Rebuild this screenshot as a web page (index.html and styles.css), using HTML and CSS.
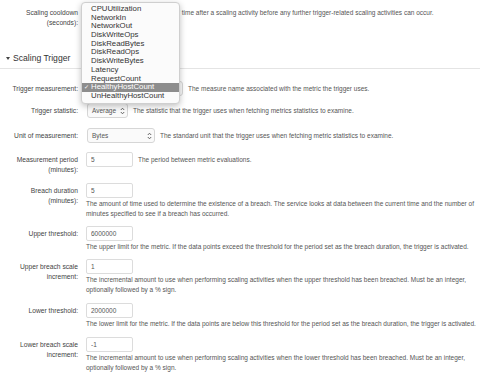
FILE: index.html
```html
<!DOCTYPE html>
<html lang="en">
<head>
  <meta charset="UTF-8">
  <title>Scaling Trigger</title>
  <link rel="stylesheet" href="styles.css">
</head>
<body>
  <div class="page">

    <div class="row r-cooldown">
      <div class="label">Scaling cooldown<br>(seconds):</div>
      <div class="field inline">
        <input class="num" type="text" value="360">
        <span class="desc">The amount of time after a scaling activity before any further trigger-related scaling activities can occur.</span>
      </div>
    </div>

    <h3 class="section"><span class="caret"></span>Scaling Trigger</h3>

    <div class="row r-measure">
      <div class="label">Trigger measurement:</div>
      <div class="field inline">
        <div class="select w-measure open"><span>HealthyHostCount</span><svg width="5" height="8" viewBox="0 0 5 8"><path d="M0.8 3 L2.5 1.2 L4.2 3 M0.8 5 L2.5 6.8 L4.2 5" fill="none" stroke="#555" stroke-width="0.9"/></svg></div>
        <span class="desc">The measure name associated with the metric the trigger uses.</span>
      </div>
    </div>

    <div class="row r-stat">
      <div class="label">Trigger statistic:</div>
      <div class="field inline">
        <div class="select w-stat"><span>Average</span><svg width="5" height="8" viewBox="0 0 5 8"><path d="M0.8 3 L2.5 1.2 L4.2 3 M0.8 5 L2.5 6.8 L4.2 5" fill="none" stroke="#555" stroke-width="0.9"/></svg></div>
        <span class="desc">The statistic that the trigger uses when fetching metrics statistics to examine.</span>
      </div>
    </div>

    <div class="row r-unit">
      <div class="label">Unit of measurement:</div>
      <div class="field inline">
        <div class="select w-unit"><span>Bytes</span><svg width="5" height="8" viewBox="0 0 5 8"><path d="M0.8 3 L2.5 1.2 L4.2 3 M0.8 5 L2.5 6.8 L4.2 5" fill="none" stroke="#555" stroke-width="0.9"/></svg></div>
        <span class="desc">The standard unit that the trigger uses when fetching metric statistics to examine.</span>
      </div>
    </div>

    <div class="row r-period">
      <div class="label">Measurement period<br>(minutes):</div>
      <div class="field inline">
        <input class="num" type="text" value="5">
        <span class="desc">The period between metric evaluations.</span>
      </div>
    </div>

    <div class="row r-breach">
      <div class="label">Breach duration<br>(minutes):</div>
      <div class="field">
        <input class="num" type="text" value="5">
        <p class="desc block">The amount of time used to determine the existence of a breach. The service looks at data between the current time and the number of minutes specified to see if a breach has occurred.</p>
      </div>
    </div>

    <div class="row r-upper">
      <div class="label">Upper threshold:</div>
      <div class="field">
        <input class="num" type="text" value="6000000">
        <p class="desc block">The upper limit for the metric. If the data points exceed the threshold for the period set as the breach duration, the trigger is activated.</p>
      </div>
    </div>

    <div class="row">
      <div class="label">Upper breach scale<br>increment:</div>
      <div class="field">
        <input class="num" type="text" value="1">
        <p class="desc block">The incremental amount to use when performing scaling activities when the upper threshold has been breached. Must be an integer,<br>optionally followed by a % sign.</p>
      </div>
    </div>

    <div class="row">
      <div class="label">Lower threshold:</div>
      <div class="field">
        <input class="num" type="text" value="2000000">
        <p class="desc block">The lower limit for the metric. If the data points are below this threshold for the period set as the breach duration, the trigger is activated.</p>
      </div>
    </div>

    <div class="row">
      <div class="label">Lower breach scale<br>increment:</div>
      <div class="field">
        <input class="num" type="text" value="-1">
        <p class="desc block">The incremental amount to use when performing scaling activities when the lower threshold has been breached. Must be an integer,<br>optionally followed by a % sign.</p>
      </div>
    </div>

    <!-- open dropdown of the trigger measurement select -->
    <ul class="menu">
      <li>CPUUtilization</li>
      <li>NetworkIn</li>
      <li>NetworkOut</li>
      <li>DiskWriteOps</li>
      <li>DiskReadBytes</li>
      <li>DiskReadOps</li>
      <li>DiskWriteBytes</li>
      <li>Latency</li>
      <li>RequestCount</li>
      <li class="picked"><span class="check">✓</span>HealthyHostCount</li>
      <li>UnHealthyHostCount</li>
    </ul>

  </div>
</body>
</html>
```

FILE: styles.css
```css
body {
  margin: 0;
  background: #fff;
  font-family: 'Liberation Sans', Arial, sans-serif;
  font-size: 6.5px;
  color: #444;
}
.page {
  position: relative;
  padding-top: 5px;
  width: 480px;
  height: 374px;
  overflow: hidden;
}
.row {
  display: flex;
  margin-bottom: 8px;
}
.label {
  width: 78px;
  flex-shrink: 0;
  text-align: right;
  font-size: 6.7px;
  line-height: 9.5px;
  padding-top: 3px;
  color: #444;
}
.field {
  margin-left: 8px;
  flex: 1;
  min-width: 0;
}
.field.inline {
  display: flex;
  align-items: center;
  height: 15px;
}
.desc {
  color: #555;
  line-height: 10px;
  white-space: nowrap;
  margin-left: 5px;
}
.desc.block {
  white-space: normal;
  margin: 1px 0 0 0;
  padding-right: 0;
}
.num {
  box-sizing: border-box;
  width: 47px;
  height: 15px;
  margin: 0;
  padding: 0 4px;
  border: 1px solid #dcdcdc;
  border-radius: 2px;
  font: inherit;
  color: #555;
  background: #fff;
  display: block;
}
.select {
  box-sizing: border-box;
  height: 15px;
  margin-left: 1px;
  padding: 0 2px 0 4px;
  border: 1px solid #d6d6d6;
  border-radius: 3px;
  background: #fafafa;
  display: flex;
  align-items: center;
  justify-content: space-between;
  color: #555;
}
.select svg {
  display: block;
  flex-shrink: 0;
}
/* the popup covers the current value while it is open */
.select.open span {
  visibility: hidden;
}
.w-measure { width: 96px; }
.w-stat { width: 41px; }
.w-unit { width: 68px; }

.r-cooldown { margin-bottom: 0; }
.section {
  margin: 26px 0 12px 0;
  padding: 0 0 4px 6px;
  border-bottom: 1px solid #e4e4e4;
  font-size: 8.6px;
  font-weight: normal;
  line-height: 11px;
  color: #333;
  display: flex;
  align-items: center;
}
.caret {
  width: 0;
  height: 0;
  border-left: 2.5px solid transparent;
  border-right: 2.5px solid transparent;
  border-top: 3.5px solid #444;
  margin-right: 3px;
}
.r-measure { margin-bottom: 7px; }
.r-stat { margin-bottom: 10px; }
.r-unit { margin-bottom: 9px; }
.r-period { margin-bottom: 9px; }
.r-breach { margin-bottom: 7px; }
.r-upper { margin-bottom: 7px; }

.menu {
  position: absolute;
  left: 81px;
  top: 2px;
  width: 97px;
  margin: 0;
  padding: 2px 0;
  list-style: none;
  background: #fbfbfb;
  border: 1px solid #cfcfcf;
  border-radius: 4px;
  box-shadow: 0 2px 6px rgba(0, 0, 0, 0.25);
  font-size: 7.8px;
  color: #333;
}
.menu li {
  height: 8.7px;
  line-height: 8.7px;
  padding-left: 9px;
  position: relative;
}
.menu li.picked {
  background: #8d8d8d;
  color: #fff;
}
.check {
  position: absolute;
  left: 2px;
  top: 0;
  font-family: 'DejaVu Sans', sans-serif;
  font-size: 6px;
}
```
